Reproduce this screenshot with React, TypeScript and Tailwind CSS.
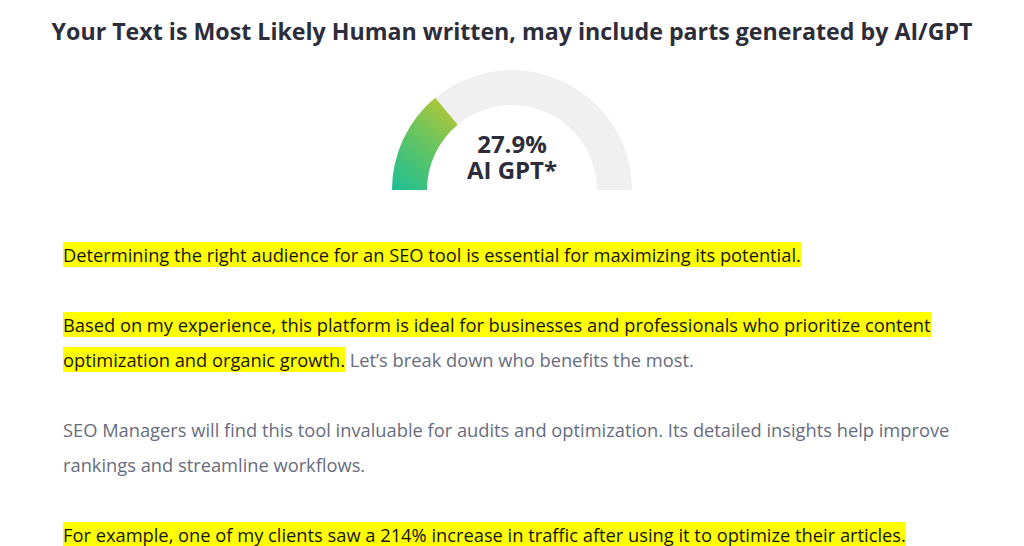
import { ReactNode } from "react";

// simple yellow marker for the sentences flagged as AI-like
function Mark({ children }: { children: ReactNode }) {
  return <span className="bg-[#ffff00] text-[#161616]">{children}</span>;
}

function Gauge({ value }: { value: number }) {
  // band: outer r 120, inner r 85, centre at (120,120)
  const angle = Math.PI - (value / 100) * Math.PI;
  const ox = 120 + 120 * Math.cos(angle);
  const oy = 120 - 120 * Math.sin(angle);
  const ix = 120 + 85 * Math.cos(angle);
  const iy = 120 - 85 * Math.sin(angle);

  return (
    <div className="relative mx-auto w-[240px] h-[120px]">
      <svg width="240" height="120" viewBox="0 0 240 120" className="absolute inset-0">
        <defs>
          <linearGradient id="g" gradientUnits="userSpaceOnUse" x1="0" y1="120" x2="68" y2="40">
            <stop offset="0" stopColor="#1cbf95" />
            <stop offset="0.6" stopColor="#6ec45c" />
            <stop offset="0.92" stopColor="#a9c63c" />
            <stop offset="1" stopColor="#c7bf22" />
          </linearGradient>
        </defs>
        <path d="M 0 120 A 120 120 0 0 1 240 120 L 205 120 A 85 85 0 0 0 35 120 Z" fill="#f0f0f0" />
        <path
          d={`M 0 120 A 120 120 0 0 1 ${ox} ${oy} L ${ix} ${iy} A 85 85 0 0 0 35 120 Z`}
          fill="url(#g)"
        />
      </svg>
      <div className="absolute left-0 right-0 top-[61px] text-center text-[24px] font-bold leading-[26px] text-[#2d2d3a]">
        <div>{value}%</div>
        <div>AI GPT*</div>
      </div>
    </div>
  );
}

export default function App() {
  return (
    <div className="w-[1024px] h-[546px] overflow-hidden bg-white font-['Open_Sans',sans-serif]">
      <h1 className="pt-[16px] text-center text-[23.2px] font-bold leading-[30px] text-[#2d2d3a]">
        Your Text is Most Likely Human written, may include parts generated by AI/GPT
      </h1>

      <div className="mt-[24px]">
        <Gauge value={27.9} />
      </div>

      <div className="mt-[47px] px-[63px] text-[18.3px] leading-[35px] text-[#676c7c]">
        <p className="mb-[35px]">
          <Mark>Determining the right audience for an SEO tool is essential for maximizing its potential.</Mark>
        </p>
        <p className="mb-[35px]">
          <Mark>
            Based on my experience, this platform is ideal for businesses and professionals who prioritize content
            optimization and organic growth.
          </Mark>{" "}
          Let’s break down who benefits the most.
        </p>
        <p className="mb-[35px]">
          SEO Managers will find this tool invaluable for audits and optimization. Its detailed insights help improve
          rankings and streamline workflows.
        </p>
        <p className="mb-[35px]">
          <Mark>For example, one of my clients saw a 214% increase in traffic after using it to optimize their articles.</Mark>
        </p>
      </div>
    </div>
  );
}
